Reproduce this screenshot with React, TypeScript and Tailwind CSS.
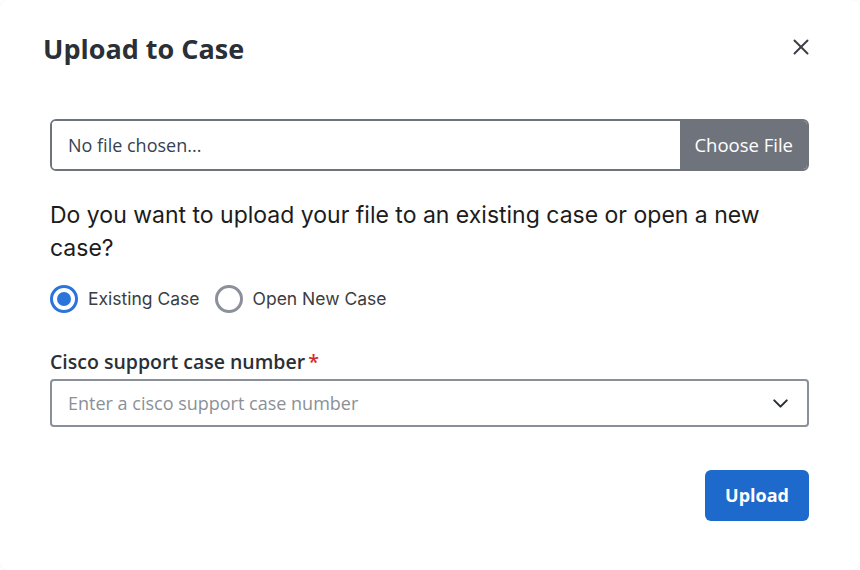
import { X, ChevronDown } from "lucide-react";

export default function App() {
  return (
    <div className="min-h-screen bg-white font-['Open_Sans',sans-serif]">
      <div className="h-[570px] w-[860px] rounded-lg bg-white pl-[50px] pr-[51px] pt-[28px] shadow-[0_0_2px_rgba(0,0,0,0.08)]">
        <div className="-ml-[7px] flex items-start justify-between">
          <h2 className="text-[27px] font-bold leading-[42px] text-[#2b2f36]">Upload to Case</h2>
          <button type="button" className="mr-[-5px] mt-[6px] text-[#3b3f46]">
            <X size={26} strokeWidth={1.8} />
          </button>
        </div>

        <div className="mt-[49px] flex h-[52px] overflow-hidden rounded-md border-2 border-[#6f747c]">
          <div className="flex flex-1 items-center bg-white px-4 text-[18px] text-[#354252]">No file chosen...</div>
          <div className="flex items-center bg-[#6f747c] px-[14px] text-[18.5px] text-white">Choose File</div>
        </div>

        <p className="mt-[28px] font-['Inter',sans-serif] text-[23px] leading-[33px] text-[#1c1c1c]">
          Do you want to upload your file to an existing case or open a new case?
        </p>

        <div className="mt-[20px] flex items-center font-['Inter',sans-serif] text-[17.5px] text-[#3a3d42]">
          <label className="flex items-center gap-[10px]">
            <span className="flex h-[28px] w-[28px] items-center justify-center rounded-full border-[3px] border-[#2a74dc]">
              <span className="h-[14px] w-[14px] rounded-full bg-[#2a74dc]" />
            </span>
            Existing Case
          </label>
          <label className="ml-[15px] flex items-center gap-[10px]">
            <span className="h-[28px] w-[28px] rounded-full border-[3px] border-[#8c9199]" />
            Open New Case
          </label>
        </div>

        <div className="mt-[35px] text-[19.5px] font-semibold leading-[27px] text-[#2b2f36]">
          Cisco support case number<span className="ml-[3px] text-[#d72c2c]">*</span>
        </div>
        <div className="mt-[4px] flex h-[48px] items-center justify-between rounded border-2 border-[#8a9099] pl-4 pr-[14px]">
          <span className="text-[18px] text-[#8b9097]">Enter a cisco support case number</span>
          <ChevronDown size={25} strokeWidth={2} className="text-[#2b2f36]" />
        </div>

        <div className="mt-[43px] flex justify-end">
          <button type="button" className="h-[51px] w-[104px] rounded-md bg-[#1d69cc] text-[18px] font-bold text-white">
            Upload
          </button>
        </div>
      </div>
    </div>
  );
}
